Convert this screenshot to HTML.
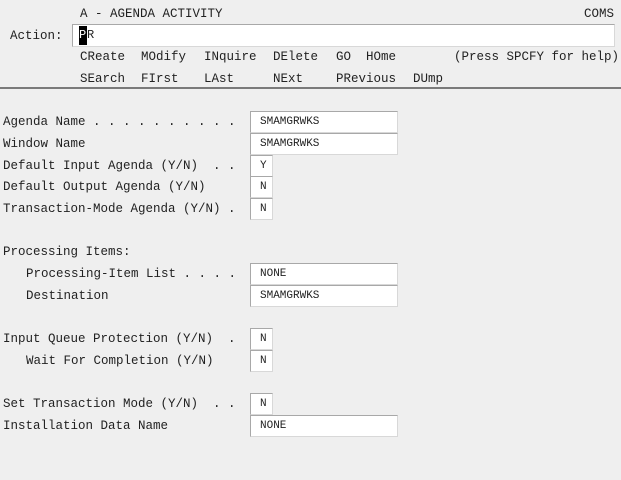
<!DOCTYPE html>
<html><head><style>
html,body{margin:0;padding:0;}
body{width:621px;height:480px;background:#efefef;position:relative;overflow:hidden;font-family:"Liberation Mono",monospace;font-size:12.5px;color:#222;}
.t{position:absolute;white-space:pre;line-height:14px;}
.b{position:absolute;background:#fff;border-top:1px solid #a8a8a8;border-left:1px solid #a8a8a8;border-right:1px solid #d8d8d8;border-bottom:1px solid #d8d8d8;box-sizing:border-box;font-size:11px;line-height:21px;padding-left:9px;white-space:pre;}
.w{left:250px;width:148px;height:22px;}
.s{left:250px;width:23px;height:22px;}
</style></head><body>
<div class="t" style="left:80px;top:7px">A - AGENDA ACTIVITY</div>
<div class="t" style="left:584px;top:7px">COMS</div>
<div class="t" style="left:10px;top:29px">Action:</div>
<div class="b" style="left:72px;top:24px;width:543px;height:23px;padding-left:6px;font-size:12px;line-height:21px"><span style="background:#000;color:#fff;display:inline-block;width:8px;height:19px;vertical-align:top;margin-top:1px;line-height:19px">P</span>R</div>
<div class="t" style="left:80px;top:50px">CReate</div>
<div class="t" style="left:141px;top:50px">MOdify</div>
<div class="t" style="left:204px;top:50px">INquire</div>
<div class="t" style="left:273px;top:50px">DElete</div>
<div class="t" style="left:336px;top:50px">GO</div>
<div class="t" style="left:366px;top:50px">HOme</div>
<div class="t" style="left:454px;top:50px">(Press SPCFY for help)</div>
<div class="t" style="left:80px;top:72px">SEarch</div>
<div class="t" style="left:141px;top:72px">FIrst</div>
<div class="t" style="left:204px;top:72px">LAst</div>
<div class="t" style="left:273px;top:72px">NExt</div>
<div class="t" style="left:336px;top:72px">PRevious</div>
<div class="t" style="left:413px;top:72px">DUmp</div>
<div style="position:absolute;left:0;top:87px;width:621px;height:2px;background:#7a7a7a"></div>

<div class="t" style="left:3px;top:115px">Agenda Name . . . . . . . . . .</div>
<div class="b w" style="top:111px">SMAMGRWKS</div>
<div class="t" style="left:3px;top:137px">Window Name</div>
<div class="b w" style="top:133px">SMAMGRWKS</div>
<div class="t" style="left:3px;top:159px">Default Input Agenda (Y/N)  . .</div>
<div class="b s" style="top:155px">Y</div>
<div class="t" style="left:3px;top:180px">Default Output Agenda (Y/N)</div>
<div class="b s" style="top:176px">N</div>
<div class="t" style="left:3px;top:202px">Transaction-Mode Agenda (Y/N) .</div>
<div class="b s" style="top:198px">N</div>

<div class="t" style="left:3px;top:245px">Processing Items:</div>
<div class="t" style="left:26px;top:267px">Processing-Item List . . . .</div>
<div class="b w" style="top:263px">NONE</div>
<div class="t" style="left:26px;top:289px">Destination</div>
<div class="b w" style="top:285px">SMAMGRWKS</div>

<div class="t" style="left:3px;top:332px">Input Queue Protection (Y/N)  .</div>
<div class="b s" style="top:328px">N</div>
<div class="t" style="left:26px;top:354px">Wait For Completion (Y/N)</div>
<div class="b s" style="top:350px">N</div>

<div class="t" style="left:3px;top:397px">Set Transaction Mode (Y/N)  . .</div>
<div class="b s" style="top:393px">N</div>
<div class="t" style="left:3px;top:419px">Installation Data Name</div>
<div class="b w" style="top:415px">NONE</div>
</body></html>
